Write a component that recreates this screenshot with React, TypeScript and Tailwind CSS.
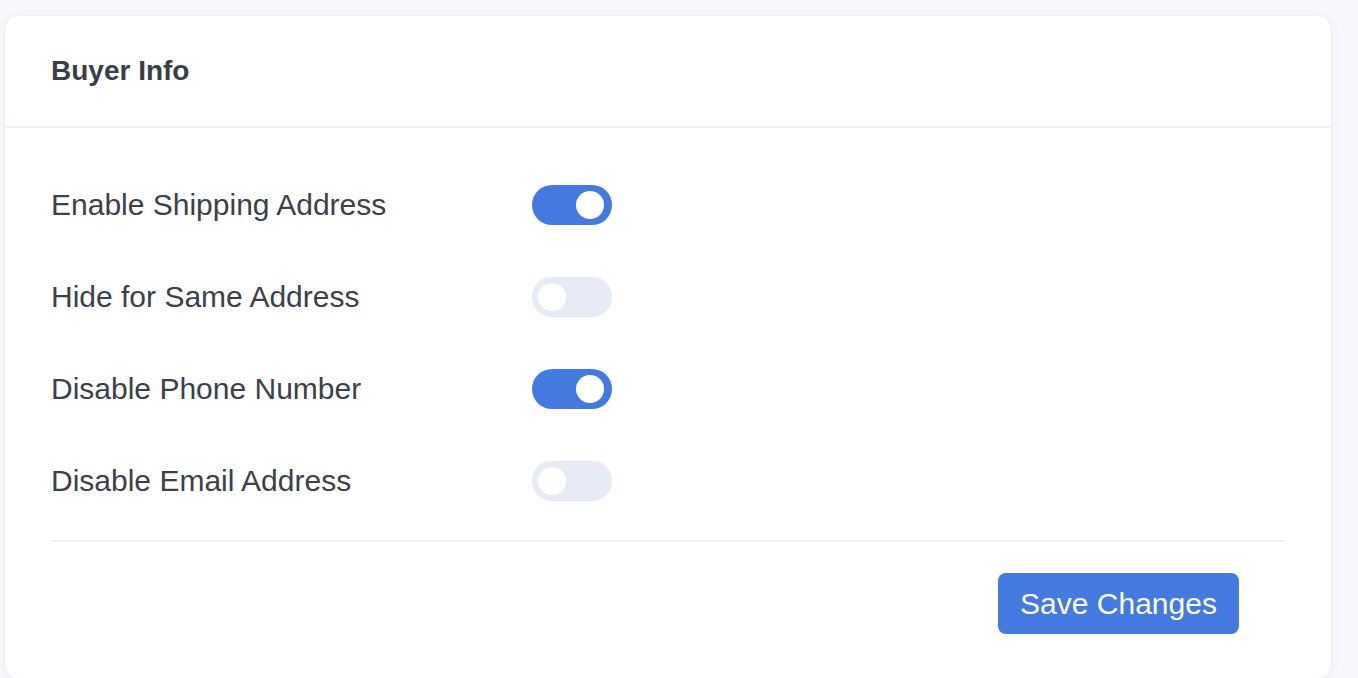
const settings = [
  { id: "shipping", label: "Enable Shipping Address", on: true },
  { id: "same", label: "Hide for Same Address", on: false },
  { id: "phone", label: "Disable Phone Number", on: true },
  { id: "email", label: "Disable Email Address", on: false },
];

function Toggle({ on }: { on: boolean }) {
  return (
    <span
      className={`relative inline-flex h-[40px] w-[80px] items-center rounded-full ${
        on ? "bg-[#4479df]" : "bg-[#e5eaf4]"
      }`}
    >
      <span
        className={`absolute top-[6px] h-[28px] w-[28px] rounded-full bg-white ${
          on ? "left-[44px]" : "left-[6px]"
        }`}
      />
    </span>
  );
}

export default function App() {
  return (
    <div className="min-h-[678px] w-full bg-[#f7f8fb] pt-[15px] font-['Liberation_Sans',Arial,sans-serif]">
      <div className="ml-[4px] w-[1328px] overflow-hidden rounded-[14px] border border-[#eceef5] bg-white shadow-[0_0_12px_rgba(30,40,90,0.03)]">
        {/* header */}
        <div className="flex h-[112px] items-center border-b-2 border-[#eef1f6] px-[46px]">
          <h2 className="text-[28px] font-bold leading-none text-[#3a3e46]">Buyer Info</h2>
        </div>

        {/* body */}
        <div className="px-[46px] pt-[31px]">
          {settings.map((s) => (
            <div key={s.id} className="flex h-[92px] items-center">
              <span className="w-[481px] text-[30px] leading-none text-[#3c4048]">{s.label}</span>
              <Toggle on={s.on} />
            </div>
          ))}
          <div className="mt-[13px] h-[2px] bg-[#eef1f6]" />
          <div className="flex justify-end pb-[44px] pr-[46px] pt-[31px]">
            <button className="h-[61px] w-[241px] rounded-[8px] bg-[#4479df] text-[30px] leading-none text-white">
              Save Changes
            </button>
          </div>
        </div>
      </div>
    </div>
  );
}
